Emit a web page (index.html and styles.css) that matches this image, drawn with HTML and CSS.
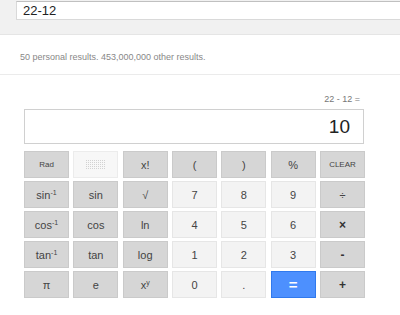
FILE: index.html
```html
<!DOCTYPE html>
<html>
<head>
<meta charset="utf-8">
<link rel="stylesheet" href="styles.css">
</head>
<body>
<div class="header">
  <div class="search">22-12</div>
</div>
<div class="stats">50 personal results. 453,000,000 other results.</div>
<div class="calc">
  <div class="expr">22 - 12 =</div>
  <div class="display">10</div>
  <div class="keys">
    <div class="key dark small">Rad</div>
    <div class="key light deg"><span class="dots"></span></div>
    <div class="key dark">x!</div>
    <div class="key dark">(</div>
    <div class="key dark">)</div>
    <div class="key dark">%</div>
    <div class="key dark small">CLEAR</div>

    <div class="key dark">sin<sup>-1</sup></div>
    <div class="key dark">sin</div>
    <div class="key dark">√</div>
    <div class="key light">7</div>
    <div class="key light">8</div>
    <div class="key light">9</div>
    <div class="key dark">÷</div>

    <div class="key dark">cos<sup>-1</sup></div>
    <div class="key dark">cos</div>
    <div class="key dark">ln</div>
    <div class="key light">4</div>
    <div class="key light">5</div>
    <div class="key light">6</div>
    <div class="key dark bold">×</div>

    <div class="key dark">tan<sup>-1</sup></div>
    <div class="key dark">tan</div>
    <div class="key dark">log</div>
    <div class="key light">1</div>
    <div class="key light">2</div>
    <div class="key light">3</div>
    <div class="key dark bold">-</div>

    <div class="key dark">π</div>
    <div class="key dark">e</div>
    <div class="key dark">x<sup>y</sup></div>
    <div class="key light">0</div>
    <div class="key light">.</div>
    <div class="key blue">=</div>
    <div class="key dark bold">+</div>
  </div>
</div>
</body>
</html>
```
FILE: styles.css
```css
html, body {
  margin: 0;
  padding: 0;
  background: #fff;
  font-family: "Liberation Sans", Arial, sans-serif;
  overflow: hidden;
}
.header {
  background: #f1f1f1;
  border-bottom: 1px solid #e5e5e5;
  padding: 1px 0 0 16px;
  box-sizing: border-box;
  height: 35px;
  overflow: hidden;
}
.search {
  width: 420px;
  height: 19px;
  box-sizing: border-box;
  background: #fff;
  border: 1px solid #d9d9d9;
  border-top-color: #c0c0c0;
  font-size: 13px;
  line-height: 17px;
  padding-left: 6px;
  color: #222;
}
.stats {
  height: 40px;
  box-sizing: border-box;
  padding: 17px 0 0 20px;
  font-size: 9px;
  line-height: 11px;
  color: #888;
  border-bottom: 1px solid #ebebeb;
}
.calc {
  width: 341px;
  margin-left: 24px;
  padding-top: 19px;
}
.expr {
  text-align: right;
  font-size: 9px;
  line-height: 11px;
  color: #777;
  padding-right: 5px;
  margin-bottom: 4px;
}
.display {
  height: 35px;
  box-sizing: border-box;
  border: 1px solid #d0d0d0;
  width: 340px;
  text-align: right;
  font-size: 19px;
  line-height: 33px;
  padding-right: 13px;
  color: #222;
}
.keys {
  margin-top: 7px;
  display: grid;
  grid-template-columns: repeat(7, 1fr);
  grid-auto-rows: 27px;
  column-gap: 4.3px;
  row-gap: 3px;
}
.key {
  box-sizing: border-box;
  display: flex;
  align-items: center;
  justify-content: center;
  font-size: 11px;
  color: #444;
  border: 1px solid transparent;
}
.key sup {
  font-size: 7px;
  line-height: 0;
  position: relative;
  top: -2px;
}
.dark {
  background: #d6d6d6;
  border-color: #cacaca;
}
.light {
  background: #f3f3f3;
  border-color: #e6e6e6;
}
.blue {
  background: #4d90fe;
  border-color: #3079ed;
  color: #fff;
  font-size: 15px;
  font-weight: bold;
}
.small {
  font-size: 8px;
}
.bold {
  font-size: 12px;
  font-weight: bold;
  color: #333;
}
.deg {
  background: #f7f7f7;
  border-color: #ececec;
}
.dots {
  width: 19px;
  height: 9px;
  background-color: #d2d2d2;
  background-image:
    linear-gradient(90deg, transparent 1px, #f7f7f7 1px),
    linear-gradient(180deg, transparent 1px, #f7f7f7 1px);
  background-size: 2px 2px;
}
```
